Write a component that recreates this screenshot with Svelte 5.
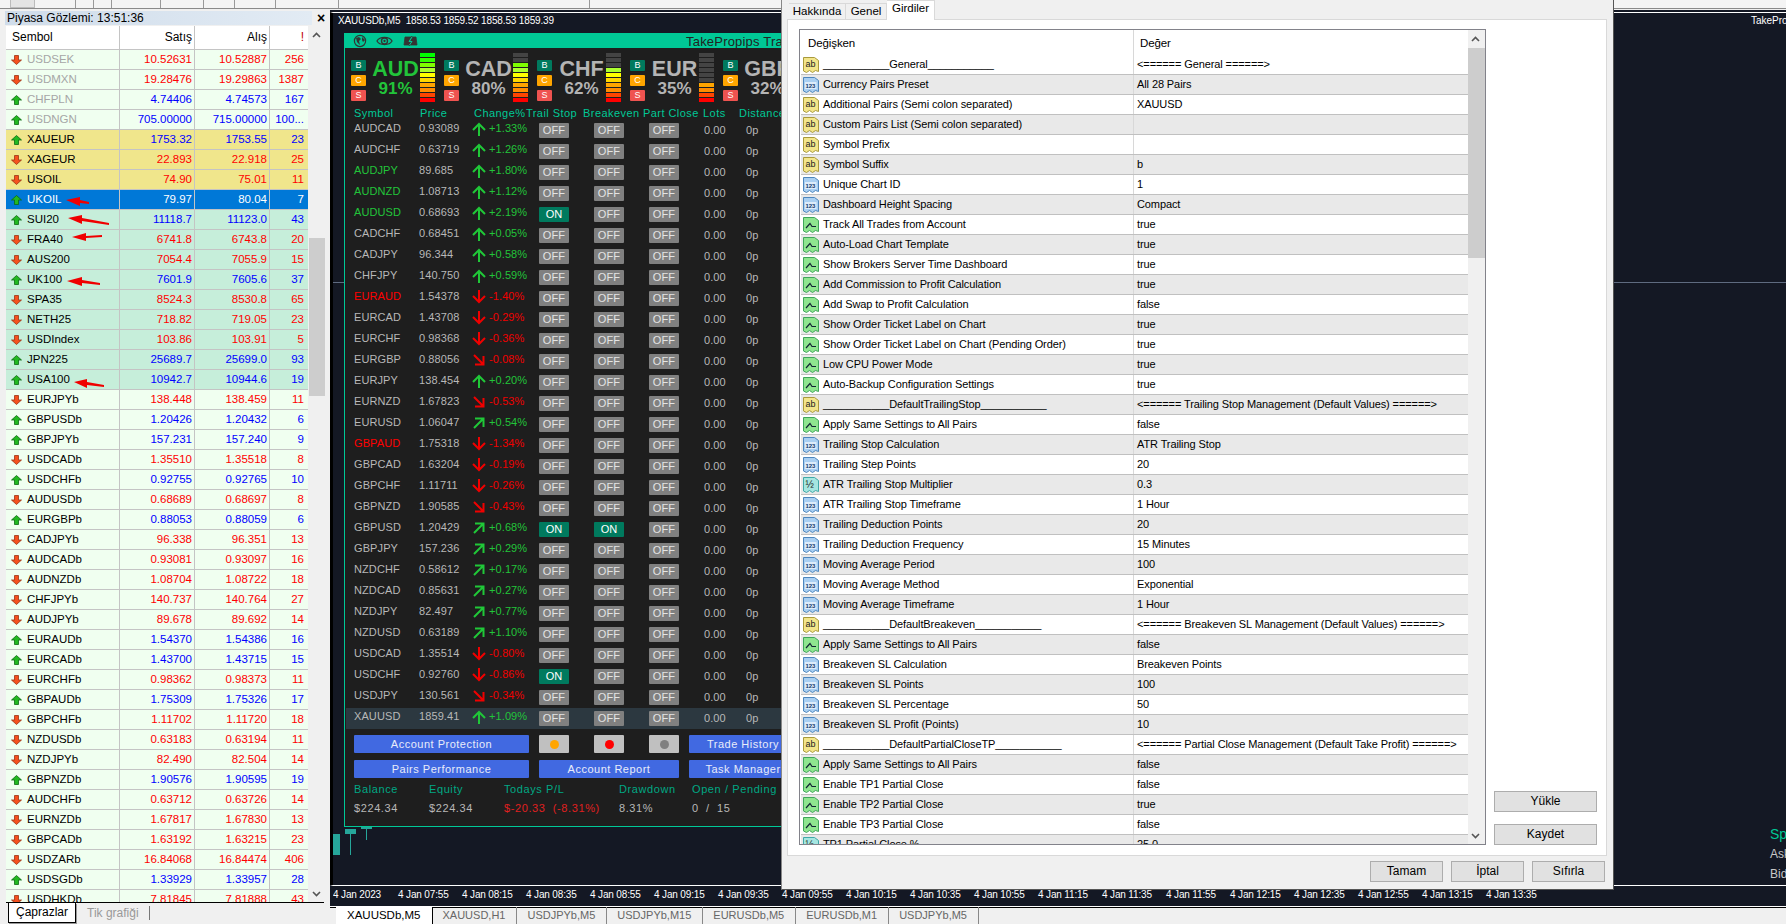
<script lang="ts">
    // market watch: symbol, bid, ask, spread, direction, group
    const quotes = [
        ["USDSEK", "10.52631", "10.52887", "256", "d", "off"],
        ["USDMXN", "19.28476", "19.29863", "1387", "d", "off"],
        ["CHFPLN", "4.74406", "4.74573", "167", "u", "off"],
        ["USDNGN", "705.00000", "715.00000", "100...", "u", "off"],
        ["XAUEUR", "1753.32", "1753.55", "23", "u", "metal"],
        ["XAGEUR", "22.893", "22.918", "25", "d", "metal"],
        ["USOIL", "74.90", "75.01", "11", "d", "metal"],
        ["UKOIL", "79.97", "80.04", "7", "u", "sel"],
        ["SUI20", "11118.7", "11123.0", "43", "u", "index"],
        ["FRA40", "6741.8", "6743.8", "20", "d", "index"],
        ["AUS200", "7054.4", "7055.9", "15", "d", "index"],
        ["UK100", "7601.9", "7605.6", "37", "u", "index"],
        ["SPA35", "8524.3", "8530.8", "65", "d", "index"],
        ["NETH25", "718.82", "719.05", "23", "d", "index"],
        ["USDIndex", "103.86", "103.91", "5", "d", "index"],
        ["JPN225", "25689.7", "25699.0", "93", "u", "index"],
        ["USA100", "10942.7", "10944.6", "19", "u", "index"],
        ["EURJPYb", "138.448", "138.459", "11", "d", ""],
        ["GBPUSDb", "1.20426", "1.20432", "6", "u", ""],
        ["GBPJPYb", "157.231", "157.240", "9", "u", ""],
        ["USDCADb", "1.35510", "1.35518", "8", "d", ""],
        ["USDCHFb", "0.92755", "0.92765", "10", "u", ""],
        ["AUDUSDb", "0.68689", "0.68697", "8", "d", ""],
        ["EURGBPb", "0.88053", "0.88059", "6", "u", ""],
        ["CADJPYb", "96.338", "96.351", "13", "d", ""],
        ["AUDCADb", "0.93081", "0.93097", "16", "d", ""],
        ["AUDNZDb", "1.08704", "1.08722", "18", "d", ""],
        ["CHFJPYb", "140.737", "140.764", "27", "d", ""],
        ["AUDJPYb", "89.678", "89.692", "14", "d", ""],
        ["EURAUDb", "1.54370", "1.54386", "16", "u", ""],
        ["EURCADb", "1.43700", "1.43715", "15", "u", ""],
        ["EURCHFb", "0.98362", "0.98373", "11", "d", ""],
        ["GBPAUDb", "1.75309", "1.75326", "17", "u", ""],
        ["GBPCHFb", "1.11702", "1.11720", "18", "d", ""],
        ["NZDUSDb", "0.63183", "0.63194", "11", "d", ""],
        ["NZDJPYb", "82.490", "82.504", "14", "d", ""],
        ["GBPNZDb", "1.90576", "1.90595", "19", "u", ""],
        ["AUDCHFb", "0.63712", "0.63726", "14", "d", ""],
        ["EURNZDb", "1.67817", "1.67830", "13", "d", ""],
        ["GBPCADb", "1.63192", "1.63215", "23", "d", ""],
        ["USDZARb", "16.84068", "16.84474", "406", "d", ""],
        ["USDSGDb", "1.33929", "1.33957", "28", "u", ""],
        ["USDHKDb", "7.81845", "7.81888", "43", "d", ""],
    ];

    // hand drawn red arrows over the list: tip x/y, head back x, head top, head bottom, tail x/y
    const marks = [
        [66, 200, 80, 197, 206, 89, 203],
        [68, 218, 82, 215, 224, 109, 224],
        [72, 237, 86, 233, 241, 102, 236],
        [67, 281, 82, 277, 286, 100, 284],
        [74, 382, 87, 379, 388, 104, 386],
    ];
    const markPoints = (m: number[]) =>
        `${m[0]},${m[1]} ${m[2]},${m[3]} ${m[2]},${m[3] + 3} ${m[5]},${m[6] - 1} ${m[5]},${m[6] + 1} ${m[2]},${m[4] - 3} ${m[2]},${m[4]}`;

    const strength = [
        { name: "AUD", pct: 91, lit: 10 },
        { name: "CAD", pct: 80, lit: 8 },
        { name: "CHF", pct: 62, lit: 7 },
        { name: "EUR", pct: 35, lit: 4 },
        { name: "GBP", pct: 32, lit: 4 },
    ];
    const segColors = ["#00ff00", "#33ff00", "#7fff00", "#adff2f", "#ffff00", "#ffd700", "#ffa500", "#ff8c00", "#ff4500", "#ff0000"];

    // symbol, price, change, arrow, name colour, trail, breakeven
    const pairs = [
        ["AUDCAD", "0.93089", "+1.33", "up", "", 0, 0],
        ["AUDCHF", "0.63719", "+1.26", "up", "", 0, 0],
        ["AUDJPY", "89.685", "+1.80", "up", "g", 0, 0],
        ["AUDNZD", "1.08713", "+1.12", "up", "g", 0, 0],
        ["AUDUSD", "0.68693", "+2.19", "up", "g", 1, 0],
        ["CADCHF", "0.68451", "+0.05", "up", "", 0, 0],
        ["CADJPY", "96.344", "+0.58", "up", "", 0, 0],
        ["CHFJPY", "140.750", "+0.59", "up", "", 0, 0],
        ["EURAUD", "1.54378", "-1.40", "down", "r", 0, 0],
        ["EURCAD", "1.43708", "-0.29", "down", "", 0, 0],
        ["EURCHF", "0.98368", "-0.36", "down", "", 0, 0],
        ["EURGBP", "0.88056", "-0.08", "se", "", 0, 0],
        ["EURJPY", "138.454", "+0.20", "up", "", 0, 0],
        ["EURNZD", "1.67823", "-0.53", "se", "", 0, 0],
        ["EURUSD", "1.06047", "+0.54", "ne", "", 0, 0],
        ["GBPAUD", "1.75318", "-1.34", "down", "r", 0, 0],
        ["GBPCAD", "1.63204", "-0.19", "down", "", 0, 0],
        ["GBPCHF", "1.11711", "-0.26", "down", "", 0, 0],
        ["GBPNZD", "1.90585", "-0.43", "se", "", 0, 0],
        ["GBPUSD", "1.20429", "+0.68", "ne", "", 1, 1],
        ["GBPJPY", "157.236", "+0.29", "ne", "", 0, 0],
        ["NZDCHF", "0.58612", "+0.17", "ne", "", 0, 0],
        ["NZDCAD", "0.85631", "+0.27", "ne", "", 0, 0],
        ["NZDJPY", "82.497", "+0.77", "ne", "", 0, 0],
        ["NZDUSD", "0.63189", "+1.10", "ne", "", 0, 0],
        ["USDCAD", "1.35514", "-0.80", "down", "", 0, 0],
        ["USDCHF", "0.92760", "-0.86", "down", "", 1, 0],
        ["USDJPY", "130.561", "-0.34", "se", "", 0, 0],
        ["XAUUSD", "1859.41", "+1.09", "up", "", 0, 0],
    ];

    const arrowPaths: Record<string, string> = {
        up: "M7 14V2M1 8L7 2L13 8",
        down: "M7 0V12M1 6L7 12L13 6",
        ne: "M2 12L11 3M3 2.5H11.5V11",
        se: "M2 2L11 11M11.5 3V11.5H3",
    };

    const inputs = [
        ["s", "___________General___________", "<====== General ======>"],
        ["n", "Currency Pairs Preset", "All 28 Pairs"],
        ["s", "Additional Pairs (Semi colon separated)", "XAUUSD"],
        ["s", "Custom Pairs List (Semi colon separated)", ""],
        ["s", "Symbol Prefix", ""],
        ["s", "Symbol Suffix", "b"],
        ["n", "Unique Chart ID", "1"],
        ["n", "Dashboard Height Spacing", "Compact"],
        ["b", "Track All Trades from Account", "true"],
        ["b", "Auto-Load Chart Template", "true"],
        ["b", "Show Brokers Server Time Dashboard", "true"],
        ["b", "Add Commission to Profit Calculation", "true"],
        ["b", "Add Swap to Profit Calculation", "false"],
        ["b", "Show Order Ticket Label on Chart", "true"],
        ["b", "Show Order Ticket Label on Chart (Pending Order)", "true"],
        ["b", "Low CPU Power Mode", "true"],
        ["b", "Auto-Backup Configuration Settings", "true"],
        ["s", "___________DefaultTrailingStop___________", "<====== Trailing Stop Management (Default Values) ======>"],
        ["b", "Apply Same Settings to All Pairs", "false"],
        ["n", "Trailing Stop Calculation", "ATR Trailing Stop"],
        ["n", "Trailing Step Points", "20"],
        ["f", "ATR Trailing Stop Multiplier", "0.3"],
        ["n", "ATR Trailing Stop Timeframe", "1 Hour"],
        ["n", "Trailing Deduction Points", "20"],
        ["n", "Trailing Deduction Frequency", "15 Minutes"],
        ["n", "Moving Average Period", "100"],
        ["n", "Moving Average Method", "Exponential"],
        ["n", "Moving Average Timeframe", "1 Hour"],
        ["s", "___________DefaultBreakeven___________", "<====== Breakeven SL Management (Default Values) ======>"],
        ["b", "Apply Same Settings to All Pairs", "false"],
        ["n", "Breakeven SL Calculation", "Breakeven Points"],
        ["n", "Breakeven SL Points", "100"],
        ["n", "Breakeven SL Percentage", "50"],
        ["n", "Breakeven SL Profit (Points)", "10"],
        ["s", "___________DefaultPartialCloseTP___________", "<====== Partial Close Management (Default Take Profit) ======>"],
        ["b", "Apply Same Settings to All Pairs", "false"],
        ["b", "Enable TP1 Partial Close", "false"],
        ["b", "Enable TP2 Partial Close", "true"],
        ["b", "Enable TP3 Partial Close", "false"],
        ["f", "TP1 Partial Close %", "25.0"],
    ];

    const hours = ["07:55", "08:15", "08:35", "08:55", "09:15", "09:35", "09:55", "10:15", "10:35", "10:55", "11:15", "11:35", "11:55", "12:15", "12:35", "12:55", "13:15", "13:35"];
    const chartTabs = ["XAUUSDb,M5", "XAUUSD,H1", "USDJPYb,M5", "USDJPYb,M15", "EURUSDb,M5", "EURUSDb,M1", "USDJPYb,M5"];
    const toolGaps = [40, 17, 17, 48, 42, 30, 40, 62, 250];
</script>

{#snippet inputIcon(kind: string)}
    <svg class="ico" class:ico-s={kind === "s"} class:ico-n={kind === "n"} class:ico-b={kind === "b"} class:ico-f={kind === "f"} viewBox="0 0 16 18" width="16" height="18">
        <path class="sheet" d="M.5 1.5H11.5L15.5 4.5V15.5L12.5 14.5L9.5 16.5L6.5 14.5L3.5 16.5L.5 15Z" />
        {#if kind === "s"}
            <text x="2.5" y="11" class="ico-t ab">ab</text>
        {:else if kind === "n"}
            <rect x="2" y="6" width="11.5" height="7" fill="#dcecfb" />
            <text x="2.6" y="12" class="ico-t num">123</text>
        {:else if kind === "f"}
            <text x="2.5" y="12" class="ico-t half">½</text>
        {:else}
            <path d="M3 12L7 7.5L9 10.5H13" fill="none" stroke="#123" stroke-width="1.2" />
        {/if}
    </svg>
{/snippet}

<div class="app">
    <div class="toolbar">
        <span class="tool-on"></span>
        {#each toolGaps as w}
            <span class="tool-sep" style="margin-left: {w}px"></span>
        {/each}
    </div>

    <div class="workspace">
        <section class="mw">
            <div class="mw-head">
                <div class="mw-title">Piyasa Gözlemi: 13:51:36</div>
                <span class="mw-x">×</span>
            </div>
            <div class="mw-body">
                <div class="mw-table">
                    <div class="mw-row mw-header">
                        <span class="c-sym">Sembol</span>
                        <span class="c-num">Satış</span>
                        <span class="c-num">Alış</span>
                        <span class="c-spr bang">!</span>
                    </div>
                    {#each quotes as q}
                        <div class="mw-row {q[5]} {q[4]}">
                            <span class="c-sym">
                                <svg class="tick" viewBox="0 0 11 10" width="11" height="10">
                                    {#if q[4] === "u"}
                                        <polygon points="5.5,.5 10.5,5 7.5,5 7.5,9.5 3.5,9.5 3.5,5 .5,5" fill="#22b822" stroke="#0b6a12" stroke-width=".8" />
                                    {:else}
                                        <polygon points="3.5,.5 7.5,.5 7.5,5 10.5,5 5.5,9.5 .5,5 3.5,5" fill="#f4511e" stroke="#9a3414" stroke-width=".8" />
                                    {/if}
                                </svg>
                                {q[0]}
                            </span>
                            <span class="c-num val">{q[1]}</span>
                            <span class="c-num val">{q[2]}</span>
                            <span class="c-spr val">{q[3]}</span>
                        </div>
                    {/each}
                    <svg class="marks" viewBox="6 26 302 400" width="302" height="400">
                        {#each marks as m}
                            <polygon points={markPoints(m)} fill="#f00000" />
                        {/each}
                    </svg>
                </div>
                <div class="scroll">
                    <svg class="chev" viewBox="0 0 9 6" width="9" height="6"><path d="M1 5L4.5 1.5L8 5" fill="none" stroke="#555" stroke-width="1.6" /></svg>
                    <div class="mw-thumb"></div>
                    <svg class="chev chev-down" viewBox="0 0 9 6" width="9" height="6"><path d="M1 1L4.5 4.5L8 1" fill="none" stroke="#555" stroke-width="1.6" /></svg>
                </div>
            </div>
            <div class="mw-tabs">
                <span class="mw-tab">Çaprazlar</span>
                <span class="mw-tab-off">Tik grafiği</span>
            </div>
        </section>

        <section class="chart-col">
            <div class="chart">
                <div class="chart-info">XAUUSDb,M5&nbsp; 1858.53 1859.52 1858.53 1859.39</div>
                <div class="level"></div>
                <div class="candle c1"></div>
                <div class="candle c2"></div>
                <div class="candle c3"></div>
                <div class="tag">TakePro</div>
                <div class="quote-side">
                    <div class="sp">Sp</div>
                    <div>Ask</div>
                    <div>Bid</div>
                </div>

                <div class="panel">
                    <div class="panel-bar">
                        <svg viewBox="0 0 14 14" width="14" height="14"><circle cx="7" cy="7" r="5.6" fill="none" stroke="#333" stroke-width="1.2" /><path d="M3 4L6 3L8 5L6 7L7 11L4 8ZM9 3L12 6L10 8L9 6Z" fill="#333" /></svg>
                        <svg class="gap-eye" viewBox="0 0 18 12" width="17" height="12"><path d="M1 6C4 1 14 1 17 6C14 11 4 11 1 6Z" fill="none" stroke="#333" stroke-width="1.3" /><circle cx="9" cy="6" r="3.2" fill="none" stroke="#333" stroke-width="1.4" /><circle cx="9" cy="6" r="1.2" fill="#333" /></svg>
                        <svg class="gap-bolt" viewBox="0 0 15 12" width="15" height="12"><path d="M2 2H13L14 10H1ZM9 1L6 6H9L6 11" fill="#333" stroke="#333" stroke-width=".8" /><path d="M9 2L6 6.5H9L6.5 10" fill="none" stroke="#00c896" stroke-width="1" /></svg>
                        <span class="panel-title">TakePropips Trade Manager</span>
                    </div>

                    <div class="strength">
                        {#each strength as s, i}
                            <div class="cur">
                                <div class="bcs">
                                    <span class="b">B</span>
                                    <span class="c">C</span>
                                    <span class="s">S</span>
                                </div>
                                <div class="cur-name" class:lead={i === 0}>
                                    <span class="cur-code">{s.name}</span>
                                    <span class="cur-pct">{s.pct}%</span>
                                </div>
                                <div class="meter">
                                    {#each segColors as col, n}
                                        <i style="background: {10 - n <= s.lit ? col : '#444'}"></i>
                                    {/each}
                                </div>
                            </div>
                        {/each}
                    </div>

                    <div class="cols">
                        <span>Symbol</span>
                        <span>Price</span>
                        <span>Change%</span>
                        <span>Trail Stop</span>
                        <span>Breakeven</span>
                        <span>Part Close</span>
                        <span>Lots</span>
                        <span>Distance</span>
                    </div>

                    {#each pairs as p}
                        <div class="pair" class:current={p[0] === "XAUUSD"}>
                            <span class="p-sym {p[4]}">{p[0]}</span>
                            <span class="p-price">{p[1]}</span>
                            <svg class="p-arrow" viewBox="0 0 14 14" width="14" height="14">
                                <path d={arrowPaths[p[3]]} fill="none" stroke={String(p[2]).startsWith("+") ? "#20c838" : "#f00000"} stroke-width="2" />
                            </svg>
                            <span class="p-chg" class:neg={String(p[2]).startsWith("-")}>{p[2]}%</span>
                            <span class="p-cell"><span class="toggle" class:on={p[5]}>{p[5] ? "ON" : "OFF"}</span></span>
                            <span class="p-cell"><span class="toggle" class:on={p[6]}>{p[6] ? "ON" : "OFF"}</span></span>
                            <span class="p-cell"><span class="toggle">OFF</span></span>
                            <span class="p-lots">0.00</span>
                            <span class="p-lots">0p</span>
                        </div>
                    {/each}

                    <div class="actions">
                        <span class="btn w-wide">Account Protection</span>
                        <span class="dot-btn first"><i class="orange"></i></span>
                        <span class="dot-btn"><i class="red"></i></span>
                        <span class="dot-btn"><i class="grey"></i></span>
                        <span class="btn w-side">Trade History</span>
                    </div>
                    <div class="actions second">
                        <span class="btn w-wide">Pairs Performance</span>
                        <span class="btn w-mid">Account Report</span>
                        <span class="btn w-side">Task Manager</span>
                    </div>

                    <div class="totals heads">
                        <span>Balance</span>
                        <span>Equity</span>
                        <span>Todays P/L</span>
                        <span>Drawdown</span>
                        <span>Open / Pending</span>
                    </div>
                    <div class="totals">
                        <span>$224.34</span>
                        <span>$224.34</span>
                        <span class="loss">$-20.33&nbsp; (-8.31%)</span>
                        <span>8.31%</span>
                        <span>0&nbsp; /&nbsp; 15</span>
                    </div>
                </div>
            </div>

            <div class="axis">
                <span class="first-time">4 Jan 2023</span>
                {#each hours as h}
                    <span class="time">4 Jan {h}</span>
                {/each}
            </div>

            <div class="chart-tabs">
                {#each chartTabs as t, i}
                    <span class="chart-tab" class:active={i === 0}>{t}</span>
                {/each}
            </div>
        </section>
    </div>

    <div class="dialog">
        <div class="dlg-tabs">
            <span class="dlg-tab t-about">Hakkında</span>
            <span class="dlg-tab t-general">Genel</span>
            <span class="dlg-tab active">Girdiler</span>
        </div>
        <div class="dlg-page">
            <div class="grid">
                <div class="grid-main">
                    <div class="grid-head">
                        <span class="g-name">Değişken</span>
                        <span class="g-val">Değer</span>
                    </div>
                    {#each inputs as row}
                        <div class="input-row">
                            <span class="g-name">
                                {@render inputIcon(row[0])}
                                <span>{row[1]}</span>
                            </span>
                            <span class="g-val">{row[2]}</span>
                        </div>
                    {/each}
                </div>
                <div class="grid-scroll">
                    <svg class="chev" viewBox="0 0 9 6" width="9" height="6"><path d="M1 5L4.5 1.5L8 5" fill="none" stroke="#555" stroke-width="1.6" /></svg>
                    <div class="grid-thumb"></div>
                    <svg class="chev chev-down" viewBox="0 0 9 6" width="9" height="6"><path d="M1 1L4.5 4.5L8 1" fill="none" stroke="#555" stroke-width="1.6" /></svg>
                </div>
            </div>
            <div class="dlg-side">
                <span class="win-btn wide">Yükle</span>
                <span class="win-btn wide">Kaydet</span>
            </div>
        </div>
        <div class="dlg-foot">
            <span class="win-btn">Tamam</span>
            <span class="win-btn">İptal</span>
            <span class="win-btn">Sıfırla</span>
        </div>
    </div>
</div>

<style>
    :global(body) {
        margin: 0;
        background: #f0f0f0;
    }

    .app {
        position: relative;
        width: 1786px;
        height: 924px;
        overflow: hidden;
        display: flex;
        flex-direction: column;
        background: #f0f0f0;
        font-family: "Liberation Sans", Arial, sans-serif;
        font-size: 11px;
        color: #000;
    }

    .toolbar {
        height: 8px;
        flex: none;
        display: flex;
        border-bottom: 1px solid #8a8a8a;
        background: #f4f4f4;
    }

    .tool-on {
        width: 25px;
        margin-left: 10px;
        background: #e4e4e4;
        border: 1px solid #bbb;
        border-top: 0;
        box-sizing: border-box;
    }

    .tool-sep {
        width: 1px;
        background: #999;
    }

    .workspace {
        flex: 1;
        min-height: 0;
        display: flex;
    }

    /* market watch */
    .mw {
        width: 330px;
        flex: none;
        display: flex;
        flex-direction: column;
    }

    .mw-head {
        display: flex;
        align-items: center;
        height: 14px;
        margin: 2px 0 1px 5px;
    }

    .mw-title {
        width: 307px;
        height: 14px;
        line-height: 14px;
        font-size: 12px;
        padding-left: 2px;
        box-sizing: border-box;
        background: linear-gradient(90deg, #cfdcea, #e2ebf4);
    }

    .mw-x {
        margin-left: 3px;
        width: 12px;
        text-align: center;
        font-weight: bold;
        font-size: 14px;
    }

    .mw-body {
        height: 876px;
        margin-left: 6px;
        display: flex;
    }

    .mw-table {
        position: relative;
        width: 302px;
        overflow: hidden;
        background: #fff;
    }

    .mw-row {
        height: 20px;
        box-sizing: border-box;
        display: flex;
        background: #f0fff0;
        border-bottom: 1px solid #c4c4c4;
        line-height: 19px;
        font-size: 11.5px;
    }

    .mw-header {
        height: 24px;
        line-height: 23px;
        background: #fff;
        font-size: 12px;
    }

    .bang {
        color: #c00000;
    }

    .c-sym,
    .c-num,
    .c-spr {
        box-sizing: border-box;
        border-right: 1px solid #c4c4c4;
        white-space: nowrap;
    }

    .c-sym {
        width: 114px;
        padding-left: 5px;
        display: flex;
        gap: 5px;
        align-items: center;
    }

    .mw-header .c-sym {
        padding-left: 6px;
    }

    .c-num {
        width: 75px;
        padding-right: 2px;
        text-align: right;
    }

    .c-spr {
        width: 38px;
        border-right: 0;
        padding-right: 4px;
        text-align: right;
    }

    .u .val {
        color: #0000ff;
    }

    .d .val {
        color: #ff0000;
    }

    .off .c-sym {
        color: #a6a6a6;
    }

    .metal {
        background: #f0e68c;
    }

    .index {
        background: #c6eeda;
    }

    .mw-row.sel {
        background: #0078d7;
        color: #fff;
    }

    .mw-row.sel .val {
        color: #fff;
    }

    .tick {
        flex: none;
    }

    .marks {
        position: absolute;
        left: 0;
        top: 0;
    }

    .scroll {
        position: relative;
        width: 16px;
        margin-left: 1px;
        background: #f0f0f0;
    }

    .chev {
        position: absolute;
        left: 3px;
        top: 6px;
    }

    .chev-down {
        top: auto;
        bottom: 5px;
    }

    .mw-thumb {
        margin-top: 212px;
        height: 158px;
        background: #cdcdcd;
    }

    .mw-tabs {
        height: 22px;
        margin-left: 6px;
        width: 318px;
        box-sizing: border-box;
        border-top: 1px solid #000;
        display: flex;
        align-items: flex-start;
        font-size: 12px;
    }

    .mw-tab {
        width: 68px;
        height: 20px;
        margin-left: 2px;
        line-height: 19px;
        text-align: center;
        background: #fff;
        box-sizing: border-box;
        border: 1px solid #000;
        border-top: 0;
        box-shadow: 1px 1px 0 #999;
    }

    .mw-tab-off {
        margin-left: 11px;
        padding-right: 10px;
        height: 14px;
        margin-top: 3px;
        line-height: 14px;
        color: #999;
        border-right: 1px solid #777;
    }

    /* chart */
    .chart-col {
        flex: 1;
        min-width: 0;
        display: flex;
        flex-direction: column;
    }

    .chart {
        position: relative;
        flex: 1;
        margin-top: 3px;
        overflow: hidden;
        background: #141824;
        border-left: 3px solid #000;
        border-top: 1px solid #fff;
        box-shadow: 0 -2px 0 #141824;
        color: #fff;
    }

    .chart-info {
        margin: 1px 0 0 5px;
        line-height: 14px;
        font-size: 10px;
        letter-spacing: -0.15px;
    }

    .level {
        position: absolute;
        left: 0;
        right: 0;
        top: 269px;
        height: 1px;
        background: #5f6b80;
    }

    .candle {
        position: absolute;
        background: #26a69a;
    }

    .c1 {
        left: 0;
        top: 821px;
        width: 7px;
        height: 21px;
    }

    .c2 {
        left: 12px;
        top: 816px;
        width: 11px;
        height: 5px;
    }

    .c2::after {
        content: "";
        position: absolute;
        left: 5px;
        top: 5px;
        width: 1px;
        height: 21px;
        background: #26a69a;
    }

    .c3 {
        left: 28px;
        top: 814px;
        width: 11px;
        height: 2px;
    }

    .c3::after {
        content: "";
        position: absolute;
        left: 5px;
        top: 2px;
        width: 1px;
        height: 11px;
        background: #26a69a;
    }

    .tag {
        position: absolute;
        left: 1418px;
        top: 1px;
        line-height: 14px;
        font-size: 10px;
    }

    .quote-side {
        position: absolute;
        left: 1437px;
        top: 811px;
        line-height: 20px;
        font-size: 12px;
        color: #c8c8c8;
    }

    .sp {
        color: #00c896;
        font-size: 14px;
    }

    /* dashboard, its right part runs on under the dialog */
    .panel {
        position: absolute;
        left: 11px;
        top: 20px;
        width: 440px;
        height: 794px;
        box-sizing: border-box;
        border: 1px solid #00c896;
        background: #1e1e1e;
        color: #b8b8b8;
        letter-spacing: 0.2px;
        overflow: hidden;
    }

    .panel-bar {
        height: 14px;
        background: #00c896;
        display: flex;
        align-items: center;
        padding-left: 8px;
        color: #222;
    }

    .panel-bar svg {
        flex: none;
    }

    .gap-eye {
        margin-left: 9px;
    }

    .gap-bolt {
        margin-left: 10px;
    }

    .panel-title {
        flex: none;
        margin-left: 268px;
        font-size: 13px;
        white-space: nowrap;
        letter-spacing: 0.2px;
    }

    .strength {
        height: 58px;
        box-sizing: border-box;
        padding: 5px 0 0 6px;
        display: flex;
        gap: 9px;
    }

    .cur {
        width: 84px;
        flex: none;
        display: flex;
    }

    .bcs {
        width: 15px;
        flex: none;
        margin-top: 7px;
        display: flex;
        flex-direction: column;
        gap: 4px;
    }

    .bcs span {
        height: 11px;
        line-height: 11px;
        border-radius: 1px;
        text-align: center;
        font-size: 9px;
        color: #fff;
        background: #007a5e;
    }

    .bcs .c {
        background: #ffa500;
    }

    .bcs .s {
        background: #ef5350;
    }

    .cur-name {
        width: 54px;
        flex: none;
        padding-left: 5px;
        box-sizing: border-box;
        display: flex;
        flex-direction: column;
        align-items: center;
        font-weight: bold;
        color: #b4b4b4;
        letter-spacing: 0;
    }

    .cur-name.lead {
        color: #22c43a;
    }

    .cur-code {
        margin-top: 5px;
        font-size: 21.5px;
        line-height: 22px;
    }

    .cur-pct {
        font-size: 17px;
        line-height: 18px;
    }

    .meter {
        width: 15px;
        flex: none;
        display: flex;
        flex-direction: column;
        gap: 1px;
    }

    .meter i {
        display: block;
        height: 4px;
    }

    .cols {
        height: 14px;
        line-height: 14px;
        display: flex;
        padding-left: 9px;
        color: #00c896;
        white-space: nowrap;
        letter-spacing: 0.45px;
    }

    .cols span {
        flex: none;
    }

    .cols span:nth-child(1) {
        width: 66px;
    }

    .cols span:nth-child(2) {
        width: 54px;
    }

    .cols span:nth-child(3) {
        width: 52px;
    }

    .cols span:nth-child(4) {
        width: 57px;
    }

    .cols span:nth-child(5) {
        width: 60px;
    }

    .cols span:nth-child(6) {
        width: 60px;
    }

    .cols span:nth-child(7) {
        width: 36px;
    }

    .pair {
        height: 21px;
        display: flex;
        padding-left: 9px;
        line-height: 16px;
        color: #b8b8b8;
        letter-spacing: 0.1px;
    }

    .pair.current {
        background: #2c3840;
        margin-left: 1px;
        padding-left: 8px;
    }

    .p-sym {
        width: 65px;
        flex: none;
    }

    .p-sym.g {
        color: #22c43a;
    }

    .p-sym.r {
        color: #ff0000;
    }

    .p-price {
        width: 53px;
        flex: none;
    }

    .p-arrow {
        flex: none;
        margin-top: 2px;
        width: 14px;
        margin-right: 3px;
    }

    .p-chg {
        width: 50px;
        flex: none;
        color: #22c43a;
    }

    .p-chg.neg {
        color: #f00000;
    }

    .p-cell {
        width: 55px;
        flex: none;
        padding-top: 3px;
    }

    .toggle {
        display: block;
        width: 30px;
        height: 15px;
        line-height: 15px;
        text-align: center;
        border-radius: 1px;
        background: #808080;
        color: #e4e4e4;
    }

    .toggle.on {
        background: #007a5e;
        color: #fff;
    }

    .p-lots {
        width: 42px;
        flex: none;
        line-height: 21px;
    }

    .actions {
        display: flex;
        margin: 6px 0 0 9px;
        height: 18px;
        line-height: 18px;
    }

    .actions.second {
        margin-top: 7px;
    }

    .btn {
        flex: none;
        background: #4169e1;
        color: #e8ecfa;
        text-align: center;
        border-radius: 1px;
        white-space: nowrap;
        letter-spacing: 0.5px;
    }

    .w-wide {
        width: 175px;
    }

    .w-mid {
        width: 140px;
        margin-left: 10px;
    }

    .w-side {
        width: 108px;
        margin-left: 10px;
    }

    .dot-btn {
        flex: none;
        width: 30px;
        margin-left: 25px;
        background: #c0c0c0;
        display: flex;
        align-items: center;
        justify-content: center;
        border-radius: 1px;
    }

    .dot-btn.first {
        margin-left: 10px;
    }

    .dot-btn i {
        width: 9px;
        height: 9px;
        border-radius: 50%;
    }

    .orange {
        background: #ffa500;
    }

    .red {
        background: #ff0000;
    }

    .grey {
        background: #808080;
    }

    .totals {
        display: flex;
        padding-left: 9px;
        height: 19px;
        line-height: 19px;
        letter-spacing: 0.6px;
        white-space: nowrap;
    }

    .totals.heads {
        margin-top: 2px;
        color: #00a884;
    }

    .totals span:nth-child(1),
    .totals span:nth-child(2) {
        width: 75px;
        flex: none;
    }

    .totals span:nth-child(3) {
        width: 115px;
        flex: none;
    }

    .totals span:nth-child(4) {
        width: 73px;
        flex: none;
    }

    .loss {
        color: #e02020;
    }

    /* axis and chart tabs */
    .axis {
        height: 21px;
        flex: none;
        box-sizing: border-box;
        border-top: 1px solid #fff;
        background: #141824;
        display: flex;
        color: #fff;
        line-height: 17px;
        white-space: nowrap;
        font-size: 10px;
        letter-spacing: -0.15px;
        overflow: hidden;
        border-left: 3px solid #141824;
    }

    .first-time {
        width: 65px;
        flex: none;
    }

    .time {
        width: 64px;
        flex: none;
    }

    .chart-tabs {
        height: 18px;
        flex: none;
        box-sizing: border-box;
        border-top: 1px solid #fff;
        box-shadow: inset 0 1px 0 #000;
        padding-left: 6px;
        display: flex;
        font-size: 11px;
        color: #666;
    }

    .chart-tab {
        padding: 2px 11px 0 10px;
        border-right: 1px solid #888;
        white-space: nowrap;
    }

    .chart-tab.active {
        background: #fff;
        color: #000;
        font-size: 11.5px;
        padding-left: 11px;
        border-right: 1px solid #000;
    }

    /* settings dialog */
    .dialog {
        position: absolute;
        left: 781px;
        top: 0;
        width: 833px;
        height: 890px;
        box-sizing: border-box;
        background: #f0f0f0;
        border-right: 1px solid #555;
        border-bottom: 1px solid #555;
        border-left: 1px solid #888;
        display: flex;
        flex-direction: column;
    }

    .dlg-tabs {
        height: 19px;
        flex: none;
        display: flex;
        padding-left: 7px;
        align-items: flex-end;
        font-size: 11.5px;
    }

    .dlg-tab {
        height: 16px;
        line-height: 15px;
        box-sizing: border-box;
        text-align: center;
        border: 1px solid #d9d9d9;
        border-bottom: 0;
        border-left: 0;
    }

    .t-about {
        width: 57px;
    }

    .t-general {
        width: 41px;
    }

    .dlg-tab.active {
        width: 48px;
        height: 20px;
        line-height: 15px;
        background: #fff;
        position: relative;
        top: 1px;
    }

    .dlg-page {
        height: 837px;
        flex: none;
        margin: 0 6px 0 5px;
        box-sizing: border-box;
        border: 1px solid #d9d9d9;
        background: #fff;
        padding: 9px 0 10px 11px;
        display: flex;
    }

    .grid {
        width: 687px;
        flex: none;
        box-sizing: border-box;
        border: 1px solid #82828a;
        display: flex;
        overflow: hidden;
    }

    .grid-main {
        width: 667px;
        margin-left: 1px;
        flex: none;
    }

    .grid-head {
        height: 25px;
        display: flex;
        line-height: 26px;
        font-size: 11.5px;
    }

    .grid-head .g-name {
        padding-left: 7px;
    }

    .grid-head .g-val {
        padding-left: 6px;
    }

    .g-name {
        width: 333px;
        flex: none;
        display: flex;
        align-items: center;
        gap: 4px;
        padding-left: 2px;
        box-sizing: border-box;
        border-right: 1px solid #d8d8d8;
        white-space: nowrap;
        letter-spacing: -0.1px;
    }

    .g-val {
        padding-left: 3px;
        white-space: nowrap;
        letter-spacing: -0.1px;
    }

    .input-row {
        height: 20px;
        box-sizing: border-box;
        display: flex;
        line-height: 19px;
        border-bottom: 1px solid #c0c0c0;
    }

    .input-row:nth-child(odd) {
        background: #e9e9e9;
    }

    .ico {
        flex: none;
    }

    .sheet {
        stroke-width: 1;
    }

    .ico-s .sheet {
        fill: #f3e58a;
        stroke: #a99a3c;
    }

    .ico-n .sheet {
        fill: #a9cff2;
        stroke: #4d86bd;
    }

    .ico-b .sheet {
        fill: #8fe58f;
        stroke: #3fa55a;
    }

    .ico-f .sheet {
        fill: #a5e6e0;
        stroke: #3fa8a8;
    }

    .ico-t {
        font-family: "Liberation Sans", Arial, sans-serif;
        fill: #222;
    }

    .ab {
        font-size: 9px;
    }

    .num {
        font-size: 6px;
        font-weight: bold;
        fill: #123a6a;
    }

    .half {
        font-size: 10px;
    }

    .grid-scroll {
        position: relative;
        width: 17px;
        flex: none;
        background: #f0f0f0;
    }

    .grid-thumb {
        margin-top: 18px;
        height: 210px;
        background: #cdcdcd;
    }

    .dlg-side {
        width: 103px;
        margin-left: 8px;
        display: flex;
        flex-direction: column;
        justify-content: flex-end;
        gap: 12px;
    }

    .win-btn {
        width: 73px;
        height: 21px;
        line-height: 19px;
        box-sizing: border-box;
        text-align: center;
        background: #e1e1e1;
        border: 1px solid #adadad;
        font-size: 12px;
    }

    .win-btn.wide {
        width: 103px;
    }

    .dlg-foot {
        flex: 1;
        display: flex;
        justify-content: flex-end;
        gap: 8px;
        padding: 5px 8px 0 0;
    }
</style>
